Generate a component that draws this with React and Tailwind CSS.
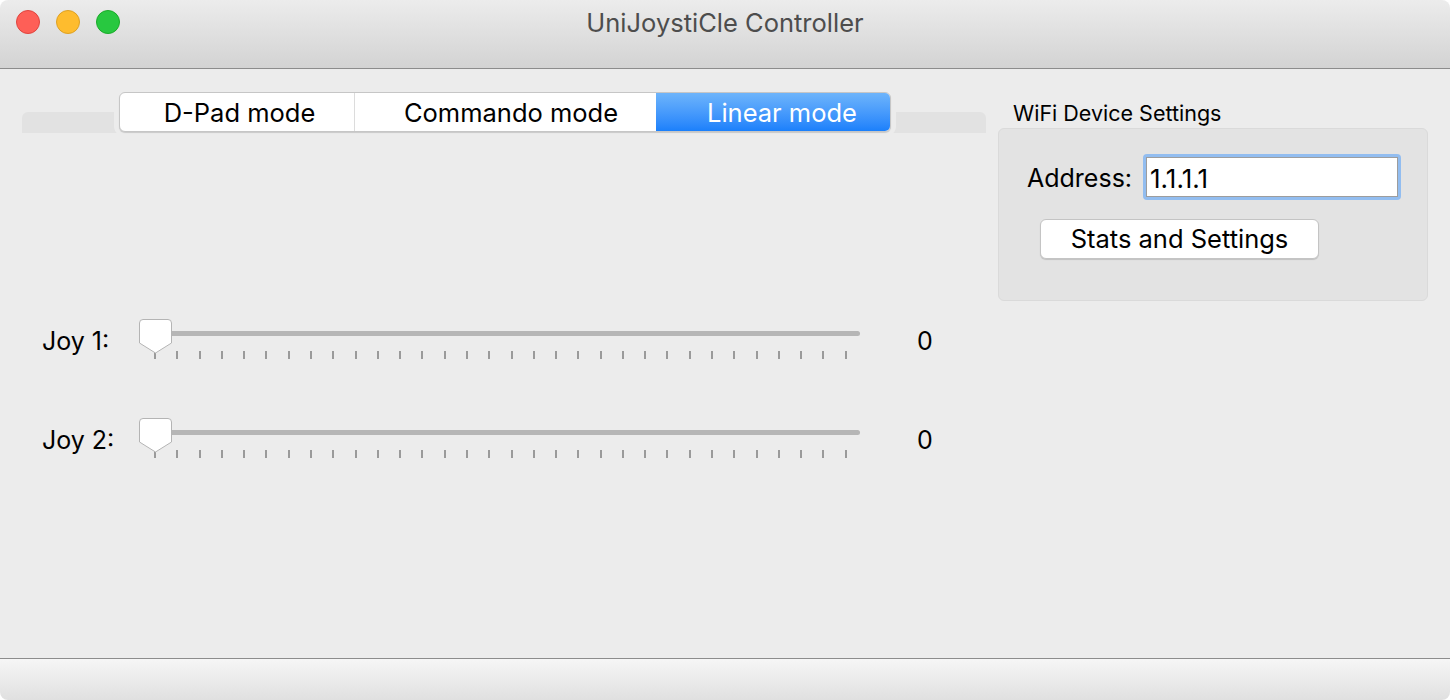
import React from "react";

const font = { fontFamily: "Inter, 'Liberation Sans', sans-serif" };

const ticks = Array.from({ length: 32 });

// Slider horizontal con marcas
const Slider = ({ label }) => (
  <div className="flex items-center h-[48px]">
    <div className="w-[117px] pl-[20px] pt-[2px] text-[25px] text-black">{label}</div>
    <div className="relative w-[721px] h-[48px]">
      {/* pista */}
      <div className="absolute left-[16px] right-0 top-[14px] h-[5px] rounded-full bg-[#b6b6b6]" />
      {/* marcas */}
      <div className="absolute left-[15px] w-[693px] top-[34px] flex justify-between">
        {ticks.map((_, i) => (
          <div key={i} className="w-[2px] h-[8px] bg-[#9a9a9a]" />
        ))}
      </div>
      {/* thumb */}
      <svg className="absolute left-0 top-[2px]" width="33" height="35" viewBox="0 0 33 35">
        <path
          d="M4 0.5 H29 Q32.5 0.5 32.5 4 V24 L16.5 34 L0.5 24 V4 Q0.5 0.5 4 0.5 Z"
          fill="#ffffff"
          stroke="#b4b4b4"
          strokeWidth="1"
        />
      </svg>
    </div>
    <div className="ml-[57px] pt-[2px] text-[25px] text-black">0</div>
  </div>
);

export default function App() {
  return (
    <div className="w-[1450px] h-[700px] flex flex-col overflow-hidden bg-white" style={font}>
      {/* Barra de título */}
      <div className="relative h-[69px] shrink-0 rounded-t-[8px] bg-gradient-to-b from-[#ececec] to-[#d3d3d3] border-b border-[#8c8c8c] flex items-start">
        <div className="flex gap-[16px] pl-[16px] pt-[10px]">
          <div className="w-[24px] h-[24px] rounded-full bg-[#fe5f57] border border-[#e0443e]" />
          <div className="w-[24px] h-[24px] rounded-full bg-[#febc2e] border border-[#dea123]" />
          <div className="w-[24px] h-[24px] rounded-full bg-[#28c840] border border-[#1aab29]" />
        </div>
        <div className="absolute inset-x-0 top-[4px] text-center text-[25.5px] text-[#4d4d4d]">
          UniJoystiCle Controller
        </div>
      </div>

      {/* Contenido */}
      <div className="flex-1 bg-[#ececec] flex">
        {/* Panel izquierdo */}
        <div className="w-[998px] shrink-0 pl-[22px] pr-[12px] pt-[23px]">
          <div className="relative h-[41px]">
            <div className="absolute left-0 right-0 bottom-0 h-[21px] rounded-t-[6px] bg-[#e2e2e2]" />
            <div className="absolute left-[97px] top-0 w-[772px] h-[40px] flex rounded-[6px] border border-[#c6c6c6] bg-white shadow-[0_1px_1px_rgba(0,0,0,0.15),0_0_0_5px_#ececec] overflow-hidden text-[25.5px]">
              <div className="w-[235px] flex items-center justify-center pl-[5px] pt-[3px] text-black border-r border-[#dcdcdc]">
                D-Pad mode
              </div>
              <div className="w-[301px] flex items-center justify-center pl-[11px] pt-[3px] text-black">
                Commando mode
              </div>
              <div className="flex-1 flex items-center justify-center pl-[18px] pt-[3px] text-white bg-gradient-to-b from-[#6db4fb] to-[#1a80fb]">
                Linear mode
              </div>
            </div>
          </div>
          <div className="mt-[184px]">
            <Slider label="Joy 1:" />
          </div>
          <div className="mt-[51px]">
            <Slider label="Joy 2:" />
          </div>
        </div>

        {/* Panel derecho */}
        <div className="w-[430px] pt-[30px]">
          <div className="pl-[15px] text-[21.5px] text-black leading-[28px]">WiFi Device Settings</div>
          <div className="mt-[1px] h-[173px] rounded-[6px] bg-[#e3e3e3] border border-[#dadada] pt-[25px]">
            <div className="flex items-center pl-[28px]">
              <div className="text-[25px] pt-[3px] text-black w-[116px]">Address:</div>
              <div className="w-[258px] h-[46px] rounded-[4px] bg-[#92bdf0] p-[3px]">
                <div className="w-full h-full bg-white border border-[#9d9d9d] flex items-center pl-[3px] pt-[2px] text-[26px] text-black">
                  1.1.1.1
                </div>
              </div>
            </div>
            <div className="pl-[41px] mt-[19px]">
              <div className="w-[279px] h-[40px] rounded-[6px] bg-white border border-[#c4c4c4] shadow-[0_1px_1px_rgba(0,0,0,0.15)] flex items-center justify-center pt-[1px] text-[25.5px] text-black">
                Stats and Settings
              </div>
            </div>
          </div>
        </div>
      </div>

      {/* Barra inferior */}
      <div className="h-[42px] shrink-0 border-t border-[#8c8c8c] bg-gradient-to-b from-[#f6f6f6] to-[#e0e0e0] rounded-b-[8px]" />
    </div>
  );
}
